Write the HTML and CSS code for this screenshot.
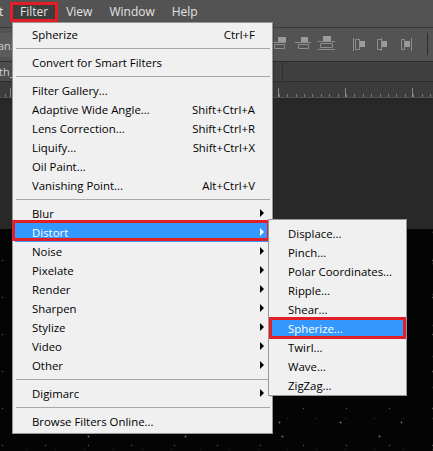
FILE: index.html
```html
<!DOCTYPE html>
<html>
<head>
<meta charset="utf-8">
<link rel="stylesheet" href="styles.css">
</head>
<body>
<div class="app">
  <div class="menubar">
    <span class="mb-item mb-cut">t</span>
    <span class="mb-item mb-active">Filter</span>
    <span class="mb-item">View</span>
    <span class="mb-item">Window</span>
    <span class="mb-item">Help</span>
  </div>
  <div class="optbar">
    <span class="opt-label">an:</span>
    <svg class="opt-icons" width="163" height="33" viewBox="0 0 163 33">
      <g fill="#9b9b9b">
        <rect x="8" y="9" width="8" height="5"/>
        <rect x="31" y="9" width="7" height="5"/>
        <rect x="53" y="8" width="8" height="5"/>
        <rect x="90" y="13" width="5" height="6"/>
        <rect x="112" y="13" width="5" height="6"/>
        <rect x="135" y="13" width="5" height="6"/>
      </g>
      <g fill="none" stroke="#8d8d8d" stroke-width="1">
        <path d="M0 14.5H16M4.5 16.5h10v4h-10z"/>
        <path d="M25 14.5H41M28.5 16.5h10v4h-10z"/>
        <path d="M48 13.5H65M50.5 15.5h12v4h-12zM48 21.5H65"/>
        <path d="M83.5 10v13M85.5 11.5h4v10h-4z"/>
        <path d="M111.5 10v13M107.5 11.5h4v10h-4z"/>
        <path d="M141.5 10v13M131.5 11.5h3v10h-3z"/>
      </g>
      <path d="M157.5 5v22" stroke="#2f2f2f" stroke-width="1"/>
    </svg>
  </div>
  <div class="tabs">
    <span class="tab-label">th_</span>
    <span class="tab-rest"></span>
  </div>
  <div class="ruler"></div>
  <div class="canvas">
    <div class="canvas-dark"></div>
    <div class="canvas-stars"></div>
  </div>

  <div class="menu main-menu">
    <div class="row"><span class="lbl">Spherize</span><span class="sc">Ctrl+F</span></div>
    <div class="sep"></div>
    <div class="row"><span class="lbl">Convert for Smart Filters</span></div>
    <div class="sep"></div>
    <div class="row"><span class="lbl">Filter Gallery...</span></div>
    <div class="row"><span class="lbl">Adaptive Wide Angle...</span><span class="sc">Shift+Ctrl+A</span></div>
    <div class="row"><span class="lbl">Lens Correction...</span><span class="sc">Shift+Ctrl+R</span></div>
    <div class="row"><span class="lbl">Liquify...</span><span class="sc">Shift+Ctrl+X</span></div>
    <div class="row"><span class="lbl">Oil Paint...</span></div>
    <div class="row"><span class="lbl">Vanishing Point...</span><span class="sc">Alt+Ctrl+V</span></div>
    <div class="sep"></div>
    <div class="row"><span class="lbl">Blur</span><span class="arrow"></span></div>
    <div class="row hl main-hl"><span class="lbl">Distort</span><span class="arrow"></span></div>
    <div class="row"><span class="lbl">Noise</span><span class="arrow"></span></div>
    <div class="row"><span class="lbl">Pixelate</span><span class="arrow"></span></div>
    <div class="row"><span class="lbl">Render</span><span class="arrow"></span></div>
    <div class="row"><span class="lbl">Sharpen</span><span class="arrow"></span></div>
    <div class="row"><span class="lbl">Stylize</span><span class="arrow"></span></div>
    <div class="row"><span class="lbl">Video</span><span class="arrow"></span></div>
    <div class="row"><span class="lbl">Other</span><span class="arrow"></span></div>
    <div class="sep"></div>
    <div class="row"><span class="lbl">Digimarc</span><span class="arrow"></span></div>
    <div class="sep"></div>
    <div class="row"><span class="lbl">Browse Filters Online...</span></div>
  </div>

  <div class="menu sub-menu">
    <div class="row"><span class="lbl">Displace...</span></div>
    <div class="row"><span class="lbl">Pinch...</span></div>
    <div class="row"><span class="lbl">Polar Coordinates...</span></div>
    <div class="row"><span class="lbl">Ripple...</span></div>
    <div class="row"><span class="lbl">Shear...</span></div>
    <div class="row hl sub-hl"><span class="lbl">Spherize...</span></div>
    <div class="row"><span class="lbl">Twirl...</span></div>
    <div class="row"><span class="lbl">Wave...</span></div>
    <div class="row"><span class="lbl">ZigZag...</span></div>
  </div>
</div>
</body>
</html>
```

FILE: styles.css
```css
* { box-sizing: border-box; }

body {
  margin: 0;
  background: #000;
  font-family: "Open Sans", "Noto Sans", "Liberation Sans", sans-serif;
  overflow: hidden;
}

.app {
  position: relative;
  width: 433px;
  height: 451px;
  overflow: hidden;
  display: flex;
  flex-direction: column;
}

/* ---------- menu bar ---------- */
.menubar {
  height: 28px;
  flex: none;
  background: #535353;
  border-bottom: 1px solid #3a3a3a;
  display: flex;
  align-items: flex-start;
  padding-top: 2px;
  font-size: 12px;
  color: #e2e2e2;
}

.mb-item {
  height: 20px;
  line-height: 20px;
  padding: 0 8.5px;
  white-space: nowrap;
}

.mb-cut {
  width: 10px;
  padding: 0;
  text-indent: -1px;
}

.mb-active {
  border: 3px solid #e21f26;
  background: #3e3e3e;
  line-height: 14px;
  padding: 0 7px;
  margin-right: -0.5px;
}

/* ---------- options bar ---------- */
.optbar {
  height: 34px;
  flex: none;
  background: #535353;
  border-bottom: 1px solid #2c2c2c;
  display: flex;
  align-items: center;
}

.opt-label {
  font-size: 11px;
  color: #d0d0d0;
  margin-left: -2px;
  padding-top: 2px;
  background: #5b5b5b;
  line-height: 22px;
  padding-right: 4px;
}

.opt-icons {
  margin-left: auto;
  display: block;
}

/* ---------- tab strip ---------- */
.tabs {
  height: 20px;
  flex: none;
  background: #3f3f3f;
  border-bottom: 1px solid #2c2c2c;
  display: flex;
}

.tab-label {
  font-size: 11px;
  color: #cfcfcf;
  background: #4d4d4d;
  line-height: 19px;
  padding: 0 6px 0 1px;
  margin-left: -2px;
}

.tab-rest {
  margin-left: auto;
  width: 151px;
  border-left: 1px solid #2e2e2e;
}

/* ---------- ruler ---------- */
.ruler {
  height: 16px;
  flex: none;
  background-color: #3b3b3b;
  border-bottom: 1px solid #4f4f4f;
  background-image:
    repeating-linear-gradient(90deg, #888 0 1px, transparent 1px 67px),
    repeating-linear-gradient(90deg, #7a7a7a 0 1px, transparent 1px 8.4px);
  background-position: 10px 6px, 10px 12px;
  background-size: 100% 10px, 100% 4px;
  background-repeat: repeat-x;
}

/* ---------- canvas ---------- */
.canvas {
  flex: 1;
  display: flex;
  flex-direction: column;
}

.canvas-dark {
  height: 131px;
  background: #282828;
}

.canvas-stars {
  flex: 1;
  background-color: #040404;
  background-image:
    radial-gradient(circle, rgba(255,255,255,0.45) 0 0.7px, transparent 1.2px),
    radial-gradient(circle, rgba(255,255,255,0.28) 0 0.6px, transparent 1.1px),
    radial-gradient(circle, rgba(255,255,255,0.35) 0 0.8px, transparent 1.3px),
    radial-gradient(circle, rgba(180,180,180,0.18) 0 0.6px, transparent 1.1px);
  background-size: 61px 53px, 43px 37px, 97px 71px, 29px 31px;
  background-position: 5px 8px, 24px 13px, 40px 30px, 12px 19px;
}

/* ---------- menus ---------- */
.menu {
  position: absolute;
  background: #f0f0f0;
  border: 1px solid #979797;
  font-size: 11.4px;
  color: #000;
  box-shadow: 1px 1px 0 rgba(0,0,0,0.15);
}

.main-menu {
  left: 12px;
  top: 22px;
  width: 261px;
  padding: 2px 2px 0;
  height: 412px;
}

.sub-menu {
  left: 268px;
  top: 219px;
  width: 139px;
  height: 177px;
  padding: 4px 2px 0;
}

.row {
  position: relative;
  height: 19px;
  line-height: 19px;
  display: flex;
  align-items: center;
  padding: 0 6px 0 17px;
  white-space: nowrap;
}

.sub-menu .row {
  padding-left: 17px;
}

.lbl {
  flex: 1;
}

.sc {
  margin-right: 9px;
}

.arrow {
  width: 0;
  height: 0;
  border-left: 4px solid #000;
  border-top: 4px solid transparent;
  border-bottom: 4px solid transparent;
  margin-top: -2px;
}

.sep {
  height: 9px;
  padding-top: 4px;
}

.sep::before {
  content: "";
  display: block;
  height: 1px;
  margin: 0 0 0 1px;
  background: #a8a8a8;
}

.hl {
  background: #3399ff;
  color: #fff;
}

.hl .arrow {
  border-left-color: #fff;
}

.hl::before {
  content: "";
  position: absolute;
  border: 3px solid #e21f26;
}

.main-hl::before {
  left: -3px;
  right: 0;
  top: -3px;
  bottom: 1px;
}

.sub-hl::before {
  left: -2px;
  right: -2px;
  top: -2px;
  bottom: -1px;
}
```
